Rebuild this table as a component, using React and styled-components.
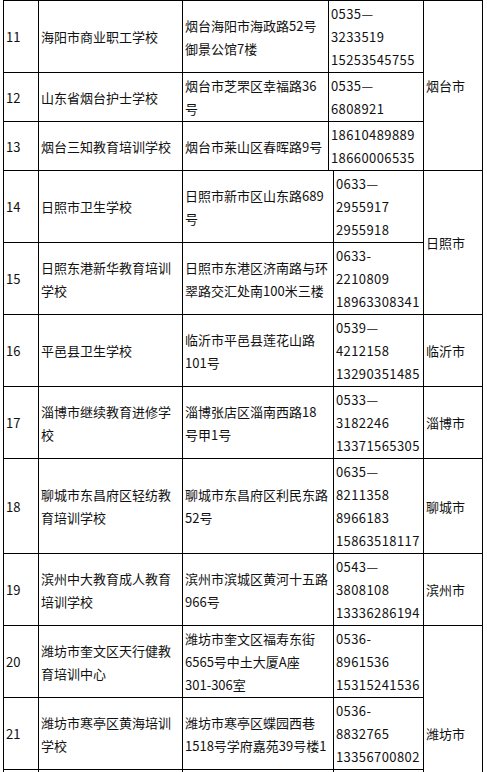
import React from "react";
import styled, { createGlobalStyle } from "styled-components";

const Global = createGlobalStyle`
  html, body {
    margin: 0;
    padding: 0;
    background: #ffffff;
  }
  body {
    font-family: "Noto Sans CJK SC", "Noto Sans", sans-serif;
    color: #111111;
  }
`;

const Page = styled.div`
  padding-left: 3px;
`;

const Section = styled.div`
  display: grid;
  width: 480px;
  box-sizing: border-box;
  grid-template-columns: ${(p) => p.$cols};
  border-left: 1px solid #000;
  border-top: ${(p) => (p.$first ? "1px solid #000" : "none")};
`;

const Cell = styled.div`
  display: flex;
  flex-direction: column;
  justify-content: center;
  box-sizing: border-box;
  padding: 1px 3px 1px 2px;
  border-right: 1px solid #000;
  border-bottom: 1px solid #000;
  font-size: 13px;
  line-height: 23px;
  letter-spacing: ${(p) => (p.$tel ? "0.4px" : "0")};
  white-space: nowrap;
  overflow: hidden;
  grid-row: ${(p) => (p.$span ? `span ${p.$span}` : "auto")};
`;

const Line = styled.span`
  display: block;
`;

const rowsA = [
  {
    n: "11",
    name: ["海阳市商业职工学校"],
    addr: ["烟台海阳市海政路52号", "御景公馆7楼"],
    tel: ["0535—", "3233519", "15253545755"],
    city: { name: "烟台市", span: 3 },
  },
  {
    n: "12",
    name: ["山东省烟台护士学校"],
    addr: ["烟台市芝罘区幸福路36", "号"],
    tel: ["0535—", "6808921"],
  },
  {
    n: "13",
    name: ["烟台三知教育培训学校"],
    addr: ["烟台市莱山区春晖路9号"],
    tel: ["18610489889", "18660006535"],
  },
];

const rowsB = [
  {
    n: "14",
    name: ["日照市卫生学校"],
    addr: ["日照市新市区山东路689", "号"],
    tel: ["0633—", "2955917", "2955918"],
    city: { name: "日照市", span: 2 },
  },
  {
    n: "15",
    name: ["日照东港新华教育培训", "学校"],
    addr: ["日照市东港区济南路与环", "翠路交汇处南100米三楼"],
    tel: ["0633-", "2210809", "18963308341"],
  },
  {
    n: "16",
    name: ["平邑县卫生学校"],
    addr: ["临沂市平邑县莲花山路", "101号"],
    tel: ["0539—", "4212158", "13290351485"],
    city: { name: "临沂市", span: 1 },
  },
  {
    n: "17",
    name: ["淄博市继续教育进修学", "校"],
    addr: ["淄博张店区淄南西路18", "号甲1号"],
    tel: ["0533—", "3182246", "13371565305"],
    city: { name: "淄博市", span: 1 },
  },
  {
    n: "18",
    name: ["聊城市东昌府区轻纺教", "育培训学校"],
    addr: ["聊城市东昌府区利民东路", "52号"],
    tel: ["0635—", "8211358", "8966183", "15863518117"],
    city: { name: "聊城市", span: 1 },
  },
  {
    n: "19",
    name: ["滨州中大教育成人教育", "培训学校"],
    addr: ["滨州市滨城区黄河十五路", "966号"],
    tel: ["0543—", "3808108", "13336286194"],
    city: { name: "滨州市", span: 1 },
  },
  {
    n: "20",
    name: ["潍坊市奎文区天行健教", "育培训中心"],
    addr: ["潍坊市奎文区福寿东街", "6565号中土大厦A座", "301-306室"],
    tel: ["0536-", "8961536", "15315241536"],
    city: { name: "潍坊市", span: 3 },
  },
  {
    n: "21",
    name: ["潍坊市寒亭区黄海培训", "学校"],
    addr: ["潍坊市寒亭区蝶园西巷", "1518号学府嘉苑39号楼1"],
    tel: ["0536-", "8832765", "13356700802"],
  },
  {
    n: "\u00a0",
    name: ["\u00a0"],
    addr: ["\u00a0"],
    tel: ["\u00a0", "\u00a0", "\u00a0"],
  },
];

function Lines({ items }) {
  return items.map((t, i) => <Line key={i}>{t}</Line>);
}

function Rows({ rows }) {
  return rows.map((r, idx) => (
    <React.Fragment key={idx}>
      <Cell>
        <Line>{r.n}</Line>
      </Cell>
      <Cell>
        <Lines items={r.name} />
      </Cell>
      <Cell>
        <Lines items={r.addr} />
      </Cell>
      <Cell $tel>
        <Lines items={r.tel} />
      </Cell>
      {r.city && (
        <Cell $span={r.city.span}>
          <Line>{r.city.name}</Line>
        </Cell>
      )}
    </React.Fragment>
  ));
}

export default function App() {
  return (
    <Page>
      <Global />
      <Section $first $cols="35px 144px 146px 95px 59px">
        <Rows rows={rowsA} />
      </Section>
      <Section $cols="35px 144px 151px 90px 59px">
        <Rows rows={rowsB} />
      </Section>
    </Page>
  );
}
